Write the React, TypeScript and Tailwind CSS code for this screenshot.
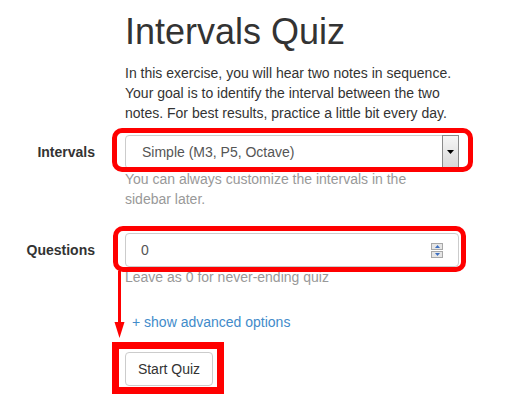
import React from "react";

function LabelCol({ children }: { children?: React.ReactNode }) {
  return (
    <div className="w-[95px] shrink-0 text-right text-[14px] leading-[20px] font-bold text-[#333] pt-[7px]">
      {children}
    </div>
  );
}

export default function App() {
  return (
    <div className="relative w-[510px] h-[404px] overflow-hidden bg-white text-[#333] font-['Liberation_Sans',Arial,sans-serif]">
      <div className="pt-[12px]">
        {/* Title + intro */}
        <div className="flex">
          <div className="w-[95px] shrink-0" />
          <div className="ml-[30px] w-[334px]">
            <h1 className="text-[36px] leading-[40px] font-normal text-[#333]">Intervals Quiz</h1>
            <p className="mt-[11px] text-[14px] leading-[20px] text-[#333]">
              In this exercise, you will hear two notes in sequence.
              <br />
              Your goal is to identify the interval between the two
              <br />
              notes. For best results, practice a little bit every day.
            </p>
          </div>
        </div>

        {/* Intervals */}
        <div className="flex mt-[12px]">
          <LabelCol>Intervals</LabelCol>
          <div className="ml-[30px] w-[334px]">
            <div className="flex h-[34px] items-stretch rounded-[4px] border border-[#ccc] bg-white">
              <div className="flex-1 pl-[16px] text-[14px] leading-[32px] text-[#555]">
                Simple (M3, P5, Octave)
              </div>
              <div className="w-[17px] my-[-1px] mr-[-1px] border border-[#8a8a8a] bg-gradient-to-b from-[#f6f6f6] to-[#d8d8d8] flex items-center justify-center">
                <svg width="7" height="4" viewBox="0 0 7 4">
                  <polygon points="0,0 7,0 3.5,4" fill="#000" />
                </svg>
              </div>
            </div>
            <div className="text-[14px] leading-[20px] text-[#999]">
              You can always customize the intervals in the
              <br />
              sidebar later.
            </div>
          </div>
        </div>

        {/* Questions */}
        <div className="flex mt-[24px]">
          <LabelCol>Questions</LabelCol>
          <div className="ml-[30px] w-[334px]">
            <div className="flex h-[34px] items-center rounded-[4px] border border-[#ccc] bg-white pr-[15px]">
              <div className="flex-1 pl-[15px] text-[14px] leading-[20px] text-[#555]">0</div>
              <div className="flex flex-col w-[12px]">
                <div className="h-[7px] border border-[#a8a8a8] bg-[#e6e6e6] flex items-center justify-center">
                  <svg width="5" height="3" viewBox="0 0 5 3">
                    <polygon points="2.5,0 5,3 0,3" fill="#3d6fc1" />
                  </svg>
                </div>
                <div className="h-[7px] mt-[1px] border border-[#a8a8a8] bg-[#e6e6e6] flex items-center justify-center">
                  <svg width="5" height="3" viewBox="0 0 5 3">
                    <polygon points="0,0 5,0 2.5,3" fill="#3d6fc1" />
                  </svg>
                </div>
              </div>
            </div>
            <div className="text-[14px] leading-[20px] text-[#999]">Leave as 0 for never-ending quiz</div>

            <div className="mt-[25px] pl-[7px] text-[14px] leading-[20px] text-[#428bca]">
              + show advanced options
            </div>

            <button className="mt-[20px] w-[88px] h-[34px] rounded-[4px] border border-[#ccc] bg-white text-[14px] leading-[20px] text-[#333] flex items-center justify-center">
              Start Quiz
            </button>
          </div>
        </div>
      </div>

      {/* Red annotation overlays */}
      <div className="absolute left-[112px] top-[128px] w-[361px] h-[44px] border-[5px] border-[#ff0000] rounded-[10px] pointer-events-none" />
      <div className="absolute left-[113px] top-[226px] w-[353px] h-[46px] border-[5px] border-[#ff0000] rounded-[10px] pointer-events-none" />
      <div className="absolute left-[112px] top-[342px] w-[112px] h-[52px] border-[7px] border-[#ff0000] pointer-events-none" />
      <svg className="absolute left-0 top-0 pointer-events-none" width="510" height="404">
        <rect x="118" y="271" width="3" height="52" fill="#ff0000" />
        <polygon points="114.5,322 124.5,322 119.5,338" fill="#ff0000" />
      </svg>
    </div>
  );
}
